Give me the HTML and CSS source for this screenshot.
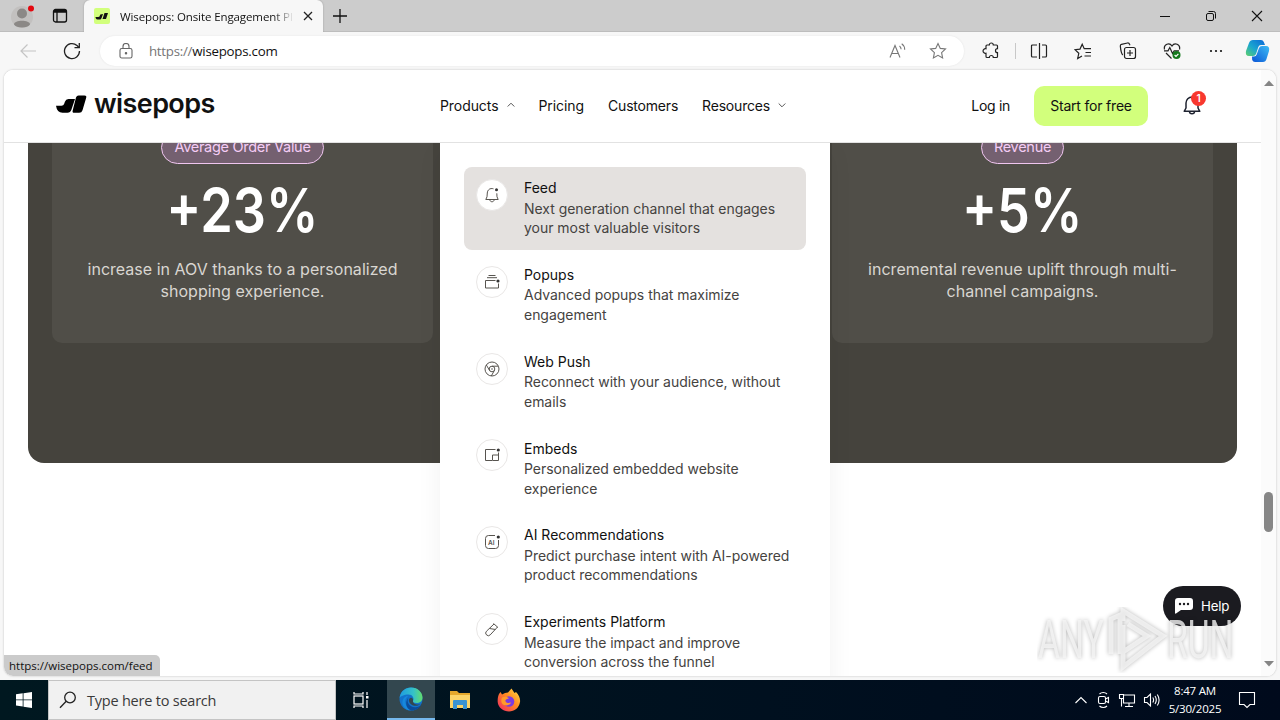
FILE: index.html
```html
<!DOCTYPE html>
<html lang="en">

<head>
    <meta charset="UTF-8" />
    <meta name="viewport" content="width=device-width, initial-scale=1.0" />
    <title>Wisepops: Onsite Engagement Platform</title>
    <link rel="stylesheet" href="styles.css">
</head>

<body>
    <div class="tabbar">
        <div class="profile">
            <svg width="24" height="28" viewBox="0 0 24 28">
                <circle cx="11" cy="15" r="11" fill="#c2c0bf" />
                <circle cx="11" cy="11.500" r="5" fill="#8b8886" />
                <path d="M3 22.500c0-5 16-5 16 0-2 4-14 4-16 0z" fill="#8b8886" />
                <circle cx="20" cy="6.500" r="3" fill="#e3080f" />
            </svg>
        </div>
        <svg class="workspaces" width="16" height="16" viewBox="0 0 16 16" fill="none" stroke="#111" stroke-width="1.300">
            <rect x="1.500" y="1.500" width="13" height="12.500" rx="2" />
            <path d="M1.500 4h13M5 4v10" />
            <path d="M2 3h12" stroke-width="2" />
        </svg>
        <div class="tab">
            <svg width="16" height="16" viewBox="0 0 16 16">
                <rect width="16" height="16" rx="2" fill="#d2ff7c" />
                <path d="M1.500 9h2.500l1.300-.2L6.300 6.500 9 6 7.500 10.300 6.500 11.500H3.500C2 11.300 1.500 10 1.500 9zM10.500 5H14l-2 6H8.500z" fill="#111" />
            </svg>
            <span class="tab-title">Wisepops: Onsite Engagement Pl</span>
            <svg width="10" height="10" viewBox="0 0 10 10" stroke="#222" stroke-width="1.300">
                <path d="M1 1l8 8M9 1L1 9" />
            </svg>
        </div>
        <svg class="new-tab" width="14" height="14" viewBox="0 0 14 14" stroke="#111" stroke-width="1.300">
            <path d="M7 0v14M0 7h14" />
        </svg>
        <div class="window-btns">
            <svg width="12" height="12" viewBox="0 0 12 12" fill="none" stroke="#111">
                <path d="M1 6.500h10" />
            </svg>
            <svg width="12" height="12" viewBox="0 0 12 12" fill="none" stroke="#111">
                <rect x="1.500" y="3.500" width="7" height="7" rx="1.500" />
                <path d="M3.500 1.500h5a2 2 0 0 1 2 2v5" />
            </svg>
            <svg width="12" height="12" viewBox="0 0 12 12" fill="none" stroke="#111" stroke-width="1.100">
                <path d="M1 1l10 10M11 1L1 11" />
            </svg>
        </div>
    </div>

    <div class="toolbar">
        <div class="tool">
            <svg width="18" height="16" viewBox="0 0 18 16" fill="none" stroke="#c4c4c4" stroke-width="1.200">
                <path d="M17 8H2M8.500 1.500L2 8l6.500 6.500" />
            </svg>
        </div>
        <div class="tool">
            <svg width="18" height="18" viewBox="0 0 18 18" fill="none" stroke="#222" stroke-width="1.300">
                <path d="M16.500 9A7.500 7.500 0 1 1 14 3.500L16 5.500" />
                <path d="M16.300 1v4.700h-4.800" />
            </svg>
        </div>
        <div class="address">
            <svg class="lock" width="14" height="16" viewBox="0 0 14 16" fill="none" stroke="#666" stroke-width="1.100">
                <rect x="1" y="5.500" width="12" height="9.500" rx="1.800" />
                <path d="M4 5.500V3.500a3 3 0 0 1 6 0v2" />
                <circle cx="7" cy="10.300" r=".7" fill="#555" />
            </svg>
            <span class="url"><span class="scheme">https://</span>wisepops.com</span>
            <svg class="read" width="18" height="16" viewBox="0 0 18 16" fill="none" stroke="#777" stroke-width="1.100">
                <path d="M1 14.500L6 2.500l5 12M2.800 10.500h6.400" />
                <path d="M10.500 3c1 .8 1.600 2 1.600 3.300M12.700.8c2 1.300 3 3.400 3 6" />
            </svg>
            <svg class="star" width="18" height="18" viewBox="0 0 18 18" fill="none" stroke="#777" stroke-width="1.100">
                <path d="M9 1.500l2.300 4.900 5.200.6-3.900 3.600 1 5.300L9 13.300l-4.600 2.600 1-5.300L1.500 7l5.200-.6z" />
            </svg>
        </div>
        <div class="tool tool-ext">
            <svg width="18" height="18" viewBox="0 0 18 18" fill="none" stroke="#222" stroke-width="1.200">
                <path d="M5 3h2.300a2 2 0 0 1 4 0H14.500q1 0 1 1v2.700a2 2 0 0 0 0 4V14.500q0 1-1 1h-3.200a2 2 0 0 0-4 0H5q-1 0-1-1v-3.300a2.300 2.300 0 1 1 0-4.400V4q0-1 1-1z" />
            </svg>
        </div>
        <div class="divider"></div>
        <div class="tool">
            <svg width="18" height="18" viewBox="0 0 18 18" fill="none" stroke="#222" stroke-width="1.200">
                <path d="M9.500 1v16M7 3H2.500q-1 0-1 1v10q0 1 1 1H7M12 3h3.500q1 0 1 1v10q0 1-1 1H12" />
            </svg>
        </div>
        <div class="tool">
            <svg width="18" height="18" viewBox="0 0 18 18" fill="none" stroke="#222" stroke-width="1.200">
                <path d="M8 14l-4.300 2.500 1.100-5.200L1 7.700l5-.6 2.200-4.800 2 4.400H17M11.500 10.500H17M10.500 14H17" />
            </svg>
        </div>
        <div class="tool">
            <svg width="18" height="18" viewBox="0 0 18 18" fill="none" stroke="#222" stroke-width="1.200">
                <rect x="5.500" y="5.500" width="11" height="11" rx="2" />
                <path d="M3.800 13C2 11.500 1.500 6 1.300 4q0-1.300 1.200-1.700l6-1.300q1.500-.2 2 1.200l.5 1M11 8v6M8 11h6" />
            </svg>
        </div>
        <div class="tool">
            <svg width="18" height="18" viewBox="0 0 18 18" fill="none" stroke="#222" stroke-width="1.200">
                <path d="M1.500 7.500C.3 2 6.500 0 9 4c2.500-4 8.700-2 7.500 3.500M3 11l5.500 5.500" />
                <path d="M1 8.800h4l1.800-3.300 2.700 6 1.700-2.700H16" />
                <circle cx="13.500" cy="13" r="4" fill="#14791d" stroke="none" />
                <path d="M11.600 13l1.400 1.400 2.400-2.600" stroke="#fff" />
            </svg>
        </div>
        <div class="tool">
            <svg width="14" height="4" viewBox="0 0 14 4" fill="#111">
                <circle cx="2" cy="2" r="1.100" />
                <circle cx="7" cy="2" r="1.100" />
                <circle cx="12" cy="2" r="1.100" />
            </svg>
        </div>
        <div class="tool copilot">
            <svg width="26" height="24" viewBox="0 0 26 24">
                <defs>
                    <linearGradient id="cpA" x1="0" y1="1" x2="1" y2="0">
                        <stop offset="0" stop-color="#5fd06c" />
                        <stop offset=".45" stop-color="#1aa6cf" />
                        <stop offset="1" stop-color="#0b67d8" />
                    </linearGradient>
                    <linearGradient id="cpB" x1="0" y1="1" x2="1" y2="0">
                        <stop offset="0" stop-color="#0a55d6" />
                        <stop offset="1" stop-color="#3cbcf5" />
                    </linearGradient>
                </defs>
                <path d="M8 1h8q2 0 2.800 2L20 6h-4q-2 0-2.700 2L11 15q-.8 2-3 2H4q-4 0-3-5l3-8q1-3 4-3z" fill="url(#cpA)" />
                <path d="M18 23h-8q-2 0-2.800-2L7 17.500h2q2 0 2.700-2L14 9q.8-2 3-2h4q4 0 3 5l-2.500 8q-.8 3-3.500 3z" fill="url(#cpB)" />
            </svg>
        </div>
    </div>

    <div class="viewport">
        <div class="page">
            <header class="site-header">
                <div class="logo">
                    <svg width="32" height="20" viewBox="0 0 32 20">
                        <path d="M0 11.800h5.500q2 0 2.600-1.700l.8-2.400Q9.800 5 12.500 5H19l-3.600 10.800q-1 3-4 3H6.500Q1 18.800 0 11.800z" />
                        <path d="M22.600 1.500h5.900q2.300 0 1.700 2.200L26.500 16.300q-.8 2.500-3.300 2.500h-5q-2.200 0-1.500-2.300L20 3.500q.7-2 2.600-2z" />
                    </svg>
                    <span class="logo-text">wisepops</span>
                </div>
                <nav>
                    <a>Products <svg width="8" height="6" viewBox="0 0 8 6"><path d="M.7 4.500L4 1.200l3.300 3.300" /></svg></a>
                    <a>Pricing</a>
                    <a>Customers</a>
                    <a>Resources <svg width="8" height="6" viewBox="0 0 8 6"><path d="M.7 1.500L4 4.800l3.300-3.300" /></svg></a>
                </nav>
                <div class="account">
                    <a class="login">Log in</a>
                    <button class="start-btn">Start for free</button>
                    <div class="bell">
                        <svg width="20" height="22" viewBox="0 0 20 22" fill="none" stroke="#1f2330" stroke-width="1.500">
                            <path d="M4 14V9a6 6 0 0 1 12 0v5l1.800 3.300H2.200z" stroke-linejoin="round" />
                            <path d="M7.500 17.500c0 3 5 3 5 0" />
                        </svg>
                        <span class="badge">1</span>
                    </div>
                </div>
            </header>

            <section class="stats">
                <div class="card">
                    <span class="pill">Average Order Value</span>
                    <strong>+23%</strong>
                    <p>increase in AOV thanks to a personalized shopping experience.</p>
                </div>
                <div class="card"></div>
                <div class="card">
                    <span class="pill">Revenue</span>
                    <strong>+5%</strong>
                    <p>incremental revenue uplift through multi-channel campaigns.</p>
                </div>
            </section>

            <div class="menu">
                <div class="item active">
                    <div class="icon">
                        <svg width="16" height="16" viewBox="0 0 16 16">
                            <path d="M9.500 1.800C6 .8 3.500 2.800 3.300 6L3 9.800l-1.200 2.700h12.400L13 9.800l-.2-3.500M5.800 12.800c.3 2.600 4.100 2.600 4.400 0" />
                            <circle cx="12.500" cy="2.800" r="1.500" class="dot" />
                        </svg>
                    </div>
                    <div>
                        <h3>Feed</h3>
                        <p>Next generation channel that engages your most valuable visitors</p>
                    </div>
                </div>
                <div class="item">
                    <div class="icon">
                        <svg width="16" height="16" viewBox="0 0 16 16">
                            <path d="M4.500 1.500h7M3 3.700h10M11.500 6.500H1.500v7.500h13V9.500" />
                            <circle cx="14" cy="7" r="1.600" class="dot" />
                        </svg>
                    </div>
                    <div>
                        <h3>Popups</h3>
                        <p>Advanced popups that maximize engagement</p>
                    </div>
                </div>
                <div class="item">
                    <div class="icon">
                        <svg width="16" height="16" viewBox="0 0 16 16">
                            <circle cx="8" cy="8" r="7" />
                            <circle cx="8" cy="8" r="2.800" />
                            <circle cx="8" cy="8" r=".7" class="dot" />
                            <path d="M8 5.200h6.300M5.600 9.400L2.300 4M10.400 9.400L7.300 15" />
                        </svg>
                    </div>
                    <div>
                        <h3>Web Push</h3>
                        <p>Reconnect with your audience, without emails</p>
                    </div>
                </div>
                <div class="item">
                    <div class="icon">
                        <svg width="16" height="16" viewBox="0 0 16 16">
                            <path d="M11.500 2.500h-10v11h6.500M14.500 5.500v8H8.500V8h6" />
                            <circle cx="14.300" cy="3" r="1.600" class="dot" />
                        </svg>
                    </div>
                    <div>
                        <h3>Embeds</h3>
                        <p>Personalized embedded website experience</p>
                    </div>
                </div>
                <div class="item">
                    <div class="icon">
                        <svg width="16" height="16" viewBox="0 0 16 16">
                            <path d="M11 1.500H4.500q-3 0-3 3v7q0 3 3 3h7q3 0 3-3V6" />
                            <circle cx="14.300" cy="3" r="1.600" class="dot" />
                            <text x="4" y="10.500">AI</text>
                        </svg>
                    </div>
                    <div>
                        <h3>AI Recommendations</h3>
                        <p>Predict purchase intent with AI-powered product recommendations</p>
                    </div>
                </div>
                <div class="item">
                    <div class="icon">
                        <svg width="16" height="16" viewBox="0 0 16 16">
                            <path d="M9.500 2.500l4.500 4M10 3L2.500 10.200a2.600 2.600 0 0 0 3.700 3.700L13.500 6M5.500 7.500l6 1" />
                        </svg>
                    </div>
                    <div>
                        <h3>Experiments Platform</h3>
                        <p>Measure the impact and improve conversion across the funnel</p>
                    </div>
                </div>
            </div>

            <div class="help">
                <svg width="20" height="18" viewBox="0 0 20 18">
                    <path d="M4 1h12q3 0 3 3v6q0 3-3 3H7l-5 3.500q-1 .5-1-.7V4q0-3 3-3z" fill="#fff" />
                    <g fill="#1b1b20">
                        <circle cx="6" cy="7" r="1.200" />
                        <circle cx="10" cy="7" r="1.200" />
                        <circle cx="14" cy="7" r="1.200" />
                    </g>
                </svg>
                Help
            </div>
            <div class="status">https://wisepops.com/feed</div>
        </div>
        <div class="scrollbar">
            <svg width="10" height="6" viewBox="0 0 10 6"><path d="M0 6l5-5.500L10 6z" /></svg>
            <div class="thumb"></div>
            <svg width="10" height="6" viewBox="0 0 10 6"><path d="M0 0l5 5.500L10 0z" /></svg>
        </div>
    </div>

    <svg class="watermark" width="230" height="66" viewBox="0 0 230 66">
        <g class="mark">
            <text transform="translate(1 51) scale(.7 1.100)">ANY</text>
            <text transform="translate(130 51) scale(.7 1.100)">RUN</text>
            <path d="M74 47V12l9-4v39M86 14V4l40 25-40 31V45l24-16-19-12M86 45V18" />
        </g>
    </svg>

    <div class="taskbar">
        <div class="start">
            <svg width="16" height="16" viewBox="0 0 16 16" fill="#fff">
                <path d="M0 2.300l6.700-1v6.200H0zM7.500 1.200L16 0v7.500H7.500zM0 8.300h6.700v6.200L0 13.600zM7.500 8.300H16V16l-8.500-1.300z" />
            </svg>
        </div>
        <div class="search">
            <svg width="18" height="18" viewBox="0 0 18 18" fill="none" stroke="#222" stroke-width="1.300">
                <circle cx="11" cy="6.500" r="5.300" />
                <path d="M7.200 10.300L1 16.800" />
            </svg>
            Type here to search
        </div>
        <div class="task">
            <svg width="18" height="18" viewBox="0 0 18 18" fill="none" stroke="#fff" stroke-width="1.200">
                <rect x="2" y="5" width="9" height="8" />
                <path d="M2 1v2h9V1M2 17v-2h9v2M15 1v3M15 9v8" />
                <rect x="14" y="5" width="2.500" height="2.500" fill="#fff" stroke="none" />
            </svg>
        </div>
        <div class="task current">
            <svg width="24" height="24" viewBox="0 0 24 24">
                <defs>
                    <linearGradient id="edA" x1="0" y1="0" x2="1" y2="0">
                        <stop offset="0" stop-color="#1e9be0" />
                        <stop offset=".6" stop-color="#35c1c8" />
                        <stop offset="1" stop-color="#63dd6c" />
                    </linearGradient>
                </defs>
                <circle cx="12" cy="12" r="11.500" fill="#1272cb" />
                <path d="M.6 11C1.500 4 6.500.5 12 .5c7 0 11.500 5 11.500 10 0 4-3 5.500-6 5.500s-4-1-3.500-2c1.500-3-.5-6.500-4.500-6.500-4.500 0-8.500 2-8.900 3.500z" fill="url(#edA)" />
                <path d="M9 9c-5 4-2.500 11.500 3 14.300C5 23.500 2 17 4 12.500 5.500 9.500 8 9 9 9z" fill="#1688dc" />
                <path d="M9.500 10.500c-3 5 2 11 8.500 9.500 1.500-.3 3-1.200 4-2-2 4-6 5.500-10 5.500C7 21.500 5.500 15 9.500 10.500z" fill="#0b4c9a" />
                <path d="M14 14c.5-2-.5-3.300-2-3.300-2.500 0-3 4 0 6.500 2.500 2 7 2.300 9.700-.2-4 1.500-8-.5-7.700-3z" fill="#33474f" />
            </svg>
        </div>
        <div class="task">
            <svg width="22" height="20" viewBox="0 0 22 20">
                <path d="M1 1h7l2 2h11v15H1z" fill="#e5a82c" />
                <path d="M1 5h20v13H1z" fill="#fcd468" />
                <path d="M4 19v-8q0-1 1-1h12q1 0 1 1v8h-4v-4H8v4z" fill="#3a93d2" />
            </svg>
        </div>
        <div class="task">
            <svg width="24" height="24" viewBox="0 0 24 24">
                <defs>
                    <linearGradient id="ffA" x1="1" y1="0" x2="0" y2="1">
                        <stop offset="0" stop-color="#ffe14a" />
                        <stop offset=".45" stop-color="#ff8a1f" />
                        <stop offset="1" stop-color="#f0216a" />
                    </linearGradient>
                </defs>
                <path d="M2 6l1.500-2 1.500 2.500 3-1.500 3-.5L14.500.5l3 4.500L19 4c3 3 4.500 6.500 4 10-1 6-5.500 9.500-11 9.500S1 19.500.7 14C.5 11 1 8 2 6z" fill="url(#ffA)" />
                <circle cx="12" cy="13.500" r="5.300" fill="#7a3be0" />
                <path d="M5 9.500c3-1.500 5.500-.5 7 .8l-3 1.200c-1.500 1.500 0 3.500 2 3.500 1 0 2-.5 3-.5-1 3-6 4-8.500 1.500C4 14.500 4 11.500 5 9.500z" fill="#ff9a2a" />
            </svg>
        </div>
        <div class="tray">
            <svg width="14" height="8" viewBox="0 0 14 8"><path d="M1.500 7L7 1.500 12.500 7" /></svg>
            <svg width="16" height="20" viewBox="0 0 16 20">
                <rect x="3.500" y="6.500" width="7" height="7" rx="1.500" />
                <path d="M10.500 9l3-1.500v5l-3-1.500M4.500 4c2-2 5.500-2 7.500 0M4.500 16c2 2 5.500 2 7.500 0" />
            </svg>
            <svg width="18" height="16" viewBox="0 0 18 16">
                <path d="M6 3h10.500v8h-11V7M11 11v3M7 14.500h8M1.500 2.500h4v4h-4zM3.500 6.500v8" />
            </svg>
            <svg width="18" height="16" viewBox="0 0 18 16">
                <path d="M1.500 5.500h2.500L7.500 2v12L4 10.500H1.500zM9.800 5.500q1.600 2.500 0 5M12 4q2.600 4 0 8M14.300 2.500q3.600 5.500 0 11" />
            </svg>
        </div>
        <div class="clock"><span>8:47 AM</span><span>5/30/2025</span></div>
        <svg class="notify" width="18" height="18" viewBox="0 0 18 18"><path d="M1.500 1.500h15v12H12L9 16.500l-3-3H1.500z" /></svg>
    </div>
</body>

</html>
```
FILE: styles.css
```css
* {
    box-sizing: border-box;
}

body {
    margin: 0;
    width: 1280px;
    height: 720px;
    overflow: hidden;
    display: flex;
    flex-direction: column;
    position: relative;
    background: #f7f7f7;
    font-family: "Open Sans", "Noto Sans", sans-serif;
    font-size: 12px;
    color: #111;
}

svg {
    display: block;
    flex: none;
}

/* browser tabs */
.tabbar {
    height: 32px;
    display: flex;
    align-items: center;
    background: #cccccc;
    border-bottom: 1px solid #bdbdbd;
}

.profile {
    width: 41px;
    padding-left: 11px;
}

.workspaces {
    margin-left: 11px;
    margin-right: 16px;
}

.tab {
    width: 239px;
    height: 32px;
    align-self: flex-start;
    display: flex;
    align-items: center;
    padding: 0 10px;
    background: #f7f7f7;
    border-radius: 6px 6px 0 0;
    box-shadow: 0 0 2px #999;
    clip-path: inset(0 -2px 0 -2px);
}

.tab-title {
    width: 174px;
    margin: 0 9px 0 10px;
    overflow: hidden;
    white-space: nowrap;
    font-size: 11.500px;
    letter-spacing: -0.1px;
    -webkit-mask-image: linear-gradient(90deg, #000 88%, transparent);
    mask-image: linear-gradient(90deg, #000 88%, transparent);
}

.new-tab {
    margin-left: 10px;
}

.window-btns {
    margin-left: auto;
    display: flex;
    gap: 34px;
    padding-right: 17px;
}

/* address bar row */
.toolbar {
    height: 38px;
    display: flex;
    align-items: center;
    padding-left: 6px;
    background: #f7f7f7;
}

.tool {
    width: 44.200px;
    display: flex;
    justify-content: center;
}

.tool-ext {
    margin-left: 5px;
}

.copilot {
    width: 40px;
}

.divider {
    width: 1px;
    height: 16px;
    margin: 0 1.500px;
    background: #c8c8c8;
}

.address {
    width: 864px;
    height: 30px;
    margin-left: 5.500px;
    display: flex;
    align-items: center;
    padding: 0 17px 0 19px;
    background: #fff;
    border-radius: 15px;
    box-shadow: 0 0 2px #e2e2e2;
}

.url {
    margin-left: 16px;
    font-size: 13.300px;
    letter-spacing: -0.250px;
}

.scheme {
    color: #767676;
}

.read {
    margin-left: auto;
}

.star {
    margin-left: 22px;
}

/* page area */
.viewport {
    height: 606px;
    margin: 0 4px 4px;
    display: flex;
    overflow: hidden;
    background: #fff;
    border-radius: 9px;
    box-shadow: 0 0 2px #b5b5b5;
}

.page {
    position: relative;
    width: 1257px;
    height: 606px;
    overflow: hidden;
    font-family: Inter, "Liberation Sans", sans-serif;
    background: #fff;
}

.scrollbar {
    flex: 1;
    display: flex;
    flex-direction: column;
    align-items: center;
    padding: 10px 0 9px;
    background: #fbfbfb;
    fill: #858585;
}

.thumb {
    width: 9px;
    height: 40px;
    margin: 406px 0 auto;
    border-radius: 5px;
    background: #868686;
}

.site-header {
    position: relative;
    z-index: 2;
    height: 73px;
    display: flex;
    align-items: center;
    padding-left: 52px;
    background: #fff;
    border-bottom: 1px solid #e2e2e2;
    font-size: 14px;
    letter-spacing: -0.070px;
}

.logo {
    width: 384px;
    display: flex;
    align-items: center;
    padding-bottom: 5px;
}

.logo-text {
    margin-left: 6px;
    font-size: 27px;
    line-height: 28px;
    font-weight: 600;
    letter-spacing: -0.600px;
}

nav {
    display: flex;
    gap: 24px;
    padding-bottom: 2px;
}

nav a {
    display: flex;
    align-items: center;
    gap: 8px;
}

nav a:nth-child(n+3) {
    letter-spacing: -0.200px;
}

nav svg {
    fill: none;
    stroke: #555;
}

.account {
    margin-left: auto;
    display: flex;
    align-items: center;
    padding-right: 59px;
}

.login {
    padding-bottom: 2px;
    letter-spacing: -0.300px;
}

.start-btn {
    width: 114px;
    height: 40px;
    margin: 0 34px 0 24px;
    padding: 0 0 2px;
    border: 0;
    border-radius: 10px;
    background: #d2ff7c;
    font: inherit;
    letter-spacing: -0.200px;
    color: #111;
}

.bell {
    position: relative;
    padding-bottom: 2px;
}

.badge {
    position: absolute;
    top: -3px;
    left: 9px;
    width: 15px;
    height: 15px;
    border-radius: 50%;
    background: #f8382f;
    color: #fff;
    font-size: 10px;
    line-height: 15px;
    font-weight: 600;
    text-align: center;
}

/* stats block scrolled under the header */
.stats {
    width: 1209px;
    height: 380px;
    margin: -60px 0 0 24px;
    padding: 24px;
    display: grid;
    grid-template-columns: repeat(3, 1fr);
    gap: 9px;
    background: #45433d;
    border-radius: 16px;
}

.card {
    height: 236px;
    padding: 24px 28px 0;
    display: flex;
    flex-direction: column;
    align-items: center;
    background: #504e48;
    border-radius: 10px;
    text-align: center;
}

.pill {
    height: 33px;
    padding: 0 12px;
    border: 1px solid #efc5ef;
    border-radius: 17px;
    background: #746070;
    color: #f4ccf5;
    font-size: 14.500px;
    line-height: 29px;
    letter-spacing: -0.280px;
}

.card strong {
    margin-top: 16px;
    font-size: 60px;
    line-height: 60px;
    font-weight: 600;
    transform: scaleX(0.870);
    color: #fff;
}

.card p {
    margin: 18px 0 0;
    font-size: 16px;
    line-height: 22.400px;
    letter-spacing: 0.020px;
    color: #d9d6d1;
}

/* products dropdown */
.menu {
    position: absolute;
    top: 73px;
    left: 436px;
    width: 390px;
    height: 560px;
    padding: 24px;
    display: flex;
    flex-direction: column;
    gap: 4px;
    background: #fff;
    box-shadow: 0 8px 24px rgba(0, 0, 0, 0.06);
}

.item {
    display: flex;
    gap: 16px;
    padding: 12px;
    border-radius: 8px;
}

.item.active {
    background: #e4e1df;
}

.item h3,
.item p {
    margin: 0;
    font-size: 14px;
    line-height: 19.600px;
    font-weight: 400;
}

.item h3 {
    margin: -0.800px 0 0.800px;
}

.item p {
    color: #45433f;
    letter-spacing: -0.030px;
}

.icon {
    width: 32px;
    height: 32px;
    flex: none;
    display: flex;
    align-items: center;
    justify-content: center;
    border: 1px solid #e9e7e6;
    border-radius: 50%;
    background: #fff;
}

.icon svg {
    fill: none;
    stroke: #57544f;
}

.icon .dot {
    fill: #333;
    stroke: none;
}

.icon text {
    fill: #57544f;
    stroke: none;
    font-size: 6.500px;
    font-weight: 600;
}

.help {
    position: absolute;
    left: 1159px;
    top: 516px;
    width: 78px;
    height: 40px;
    display: flex;
    align-items: center;
    gap: 7px;
    padding-left: 11px;
    border-radius: 20px;
    background: #1b1b20;
    color: #fff;
    font-size: 13.300px;
    letter-spacing: -0.200px;
}

.status {
    position: absolute;
    left: 0;
    bottom: 0;
    width: 156px;
    height: 21px;
    padding-left: 5px;
    background: #cbcbcb;
    border-radius: 0 5px 0 6px;
    font-family: "Open Sans", "Noto Sans", sans-serif;
    font-size: 11.500px;
    line-height: 21px;
}

.watermark {
    position: absolute;
    left: 1037px;
    top: 607px;
}

.mark {
    fill: rgba(245, 245, 245, 0.8);
    stroke: rgba(245, 245, 245, 0.8);
    filter: drop-shadow(0 0 2px rgba(0, 0, 0, 0.35));
}

.mark text {
    font-family: Roboto, sans-serif;
    font-size: 48px;
    stroke: none;
}

.mark path {
    fill: none;
    stroke-width: 5;
}

/* windows taskbar */
.taskbar {
    height: 40px;
    flex: none;
    display: flex;
    align-items: center;
    background: linear-gradient(90deg, #001820, #00101f 60%, #000a1c);
    color: #fff;
}

.start {
    width: 48px;
    padding-left: 16px;
}

.search {
    width: 288px;
    height: 40px;
    display: flex;
    align-items: center;
    gap: 10px;
    padding-left: 10px;
    background: #f1f1f1;
    border: 1px solid #c4c4c4;
    color: #3a3a3a;
    font-size: 14.500px;
    letter-spacing: -0.220px;
}

.task {
    width: 49px;
    height: 40px;
    display: flex;
    align-items: center;
    justify-content: center;
}

.task.current {
    width: 48px;
    margin-left: 2px;
    background: #33474f;
    border-bottom: 2px solid #76b9ed;
}

.tray {
    margin-left: auto;
    display: flex;
    align-items: center;
    gap: 7px;
}

.tray svg,
.notify {
    fill: none;
    stroke: #fff;
    stroke-width: 1.100;
}

.clock {
    width: 68px;
    display: flex;
    flex-direction: column;
    align-items: center;
    font-size: 11.500px;
    line-height: 18px;
    letter-spacing: -0.200px;
}

.notify {
    margin: 0 24px 0 9px;
}
```
